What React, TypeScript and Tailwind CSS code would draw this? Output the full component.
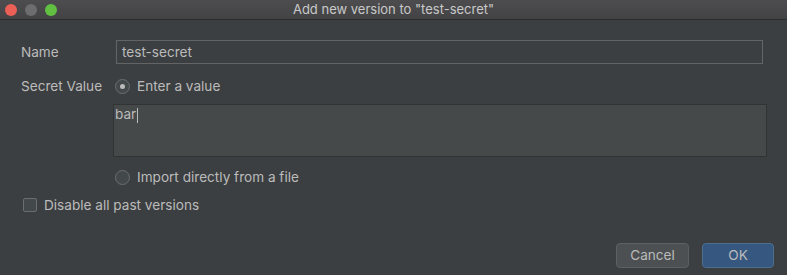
import React from 'react';

// Diálogo oscuro estilo IntelliJ (Darcula) para añadir versión de secreto
function Radio({ checked }: { checked?: boolean }) {
  return (
    <span className="w-[15px] h-[15px] rounded-full border border-[#6b6e70] bg-[#43494a] flex items-center justify-center shrink-0">
      {checked && <span className="w-[5px] h-[5px] rounded-full bg-[#bbbbbb]" />}
    </span>
  );
}

export default function App() {
  return (
    <div
      className="w-[787px] h-[275px] bg-[#3c3f41] flex flex-col text-[13.6px] text-[#bbbbbb] overflow-hidden"
      style={{ fontFamily: 'Inter, "Liberation Sans", sans-serif' }}
    >
      {/* Barra de título */}
      <div className="h-[20px] shrink-0 bg-gradient-to-b from-[#4d4d4f] to-[#434345] border-b border-[#2c2c2e] flex items-center relative">
        <div className="flex items-center gap-[8px] pl-[5px]">
          <span className="w-[12px] h-[12px] rounded-full bg-[#ec5f57]" />
          <span className="w-[12px] h-[12px] rounded-full bg-[#6d6d70]" />
          <span className="w-[12px] h-[12px] rounded-full bg-[#61c042]" />
        </div>
        <div className="absolute inset-0 flex items-center justify-center text-[#c9c9c9] text-[13px]">
          Add new version to "test-secret"
        </div>
      </div>

      <div className="flex flex-col pl-[21px]">
        {/* Nombre */}
        <div className="flex items-center h-[24px] mt-[20px]">
          <span className="w-[95px] shrink-0">Name</span>
          <div className="flex-1 mr-[24px] h-[24px] border border-[#646464] bg-[#3c3f41] flex items-center pl-[5px]">
            test-secret
          </div>
        </div>

        {/* Valor secreto */}
        <div className="flex items-center h-[20px] mt-[12px]">
          <span className="w-[94px] shrink-0">Secret Value</span>
          <Radio checked />
          <span className="ml-[7px]">Enter a value</span>
        </div>

        <div className="ml-[92px] mr-[20px] mt-[8px] h-[53px] bg-[#45494a] border border-[#313335] px-[1px] pt-[1px] leading-[17px]">
          bar<span className="inline-block w-px h-[15px] bg-[#bbbbbb] align-middle ml-px" />
        </div>

        <div className="flex items-center h-[20px] mt-[10px] ml-[94px]">
          <Radio />
          <span className="ml-[7px]">Import directly from a file</span>
        </div>

        {/* Checkbox */}
        <div className="flex items-center h-[20px] mt-[8px] ml-[2px]">
          <span className="w-[14px] h-[14px] rounded-[2px] border border-[#6b6e70] bg-[#43494a] shrink-0" />
          <span className="ml-[7px]">Disable all past versions</span>
        </div>
      </div>

      {/* Botones */}
      <div className="flex justify-end gap-[13px] mr-[13px] mt-[28px]">
        <button className="w-[73px] h-[25px] rounded-[4px] bg-[#4c5052] border border-[#5e6060] text-[#bbbbbb] text-[13.6px]">
          Cancel
        </button>
        <button className="w-[72px] h-[25px] rounded-[4px] bg-[#365880] border border-[#4c708c] text-[#bbbbbb] text-[13.6px]">
          OK
        </button>
      </div>
    </div>
  );
}
